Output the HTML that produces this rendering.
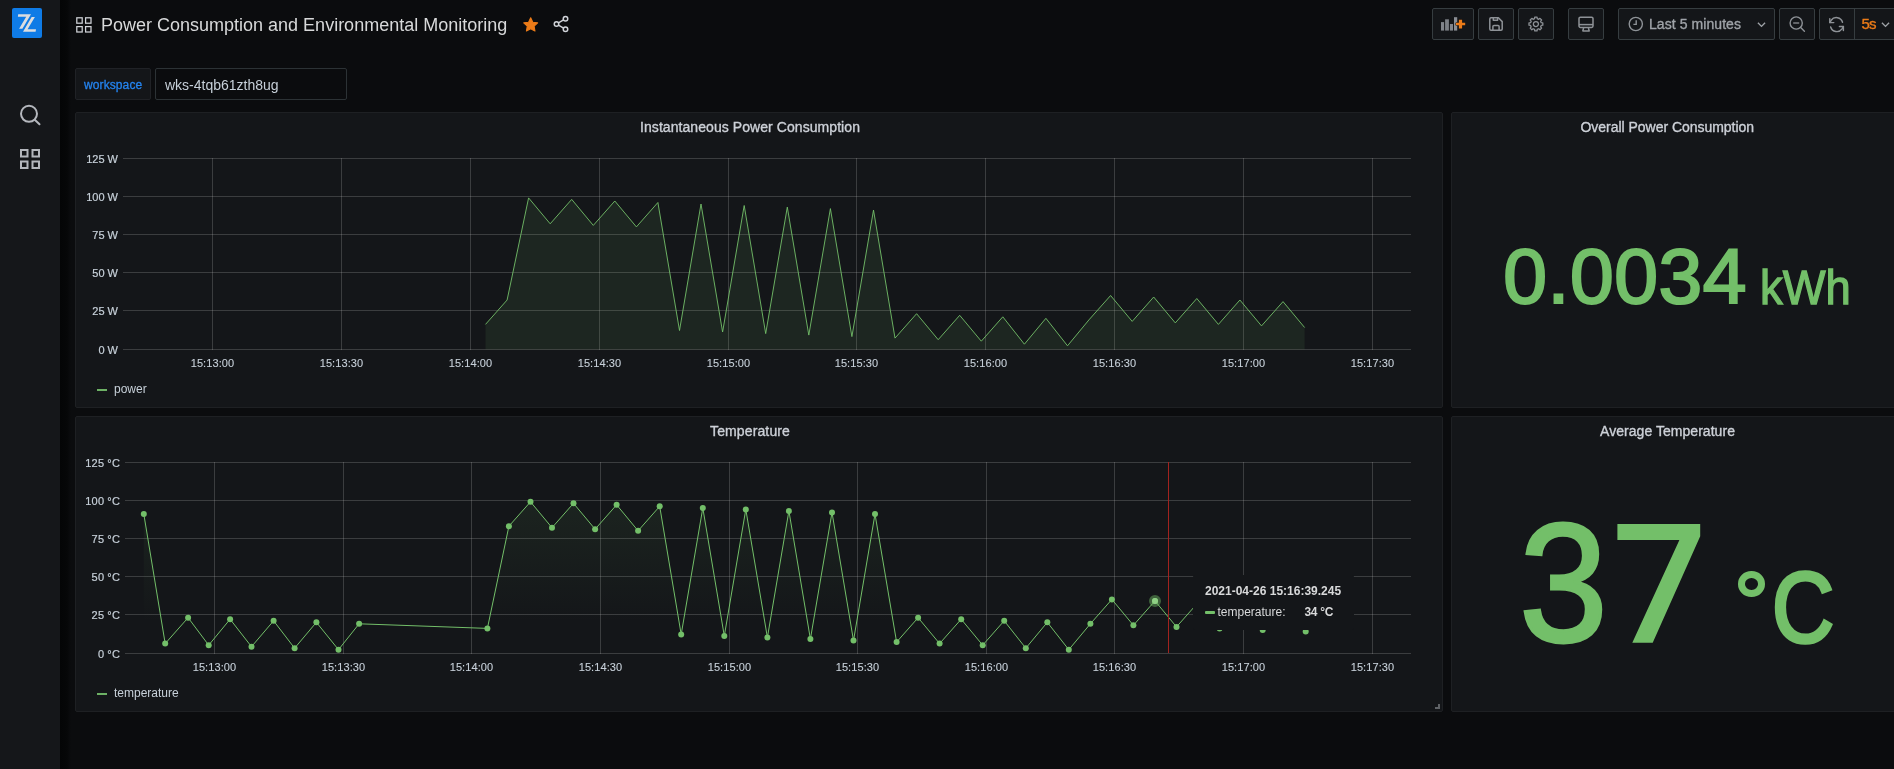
<!DOCTYPE html>
<html>
<head>
<meta charset="utf-8">
<title>Power Consumption and Environmental Monitoring - Grafana</title>
<style>
*{box-sizing:border-box;margin:0;padding:0}
html,body{width:1894px;height:769px;overflow:hidden;background:#0b0c0e;color:#c7d0d9;font-family:"Liberation Sans",sans-serif;font-size:14px}
#root{position:absolute;left:0;top:0;width:1894px;height:769px;overflow:hidden;will-change:transform}
.abs{position:absolute}
.med{-webkit-text-stroke:0.35px currentColor}
#side{position:absolute;left:0;top:0;width:59.5px;height:769px;background:#15171a}
#shadow{position:absolute;left:59.5px;top:0;width:11px;height:769px;background:linear-gradient(to right,#040506 0%,#060708 65%,#0b0c0e 100%)}
#logo{position:absolute;left:12px;top:8px;width:30px;height:30px;border-radius:2px;background:#0f7be6}
.panel{position:absolute;background:#141619;border:1px solid #1e2023;border-radius:2px}
.ptitle{position:absolute;font-size:14px;-webkit-text-stroke:0.35px currentColor;color:#cdd1d8;white-space:nowrap;text-align:center;transform-origin:center}
.btn{position:absolute;top:8px;height:32px;background:#141619;border:1px solid #363d40;border-radius:2px}
.yl{position:absolute;font-size:11px;-webkit-text-stroke:0.2px currentColor;line-height:14px;text-align:right;color:#c7d0d9;white-space:nowrap}
.xl{position:absolute;font-size:11px;-webkit-text-stroke:0.1px currentColor;letter-spacing:0.1px;line-height:14px;width:80px;text-align:center;color:#c7d0d9;white-space:nowrap}
.charts{position:absolute;left:0;top:0}
.leg{position:absolute;font-size:12px;line-height:14px;color:#c7d0d9;white-space:nowrap}
.dash{position:absolute;height:2px;width:11px;background:#6db165}
.big{position:absolute;color:#73bf69;white-space:nowrap;line-height:1}
</style>
</head>
<body>
<div id="root">
<!-- side menu -->
<div id="side"></div>
<div id="shadow"></div>
<div id="logo">
<svg width="30" height="30" viewBox="0 0 30 30"><polygon points="6.2,6.2 19,6.2 10.4,20.7 7.1,20.7 14.2,8.8 5.9,8.8" fill="#dcdde0"/><polygon points="19.65,9 22.9,9 15.6,21.3 24,21.3 23.6,23.7 11,23.7" fill="#dcdde0"/></svg>
</div>
<svg class="abs" style="left:18px;top:103px" width="24" height="24" viewBox="0 0 24 24" fill="none" stroke="#b4b7bd" stroke-width="2" stroke-linecap="round"><circle cx="11" cy="10.8" r="8"/><path d="M17 17 L21.5 21.3"/></svg>
<svg class="abs" style="left:20px;top:149px" width="20" height="20" viewBox="0 0 20 20" fill="none" stroke="#b4b7bd" stroke-width="2"><rect x="1" y="1" width="6.5" height="6.5"/><rect x="12.5" y="1" width="6.5" height="6.5"/><rect x="1" y="12.5" width="6.5" height="6.5"/><rect x="12.5" y="12.5" width="6.5" height="6.5"/></svg>

<!-- nav bar -->
<svg class="abs" style="left:76px;top:17px" width="16" height="16" viewBox="0 0 16 16" fill="none" stroke="#d0d3d8" stroke-width="1.25"><rect x="0.8" y="0.8" width="5.4" height="5.4"/><rect x="9.6" y="0.8" width="5.4" height="5.4"/><rect x="0.8" y="9.6" width="5.4" height="5.4"/><rect x="9.6" y="9.6" width="5.4" height="5.4"/></svg>
<div id="title" class="abs" style="left:101px;top:14px;font-size:18px;line-height:22px;color:#d8d9da;white-space:nowrap">Power Consumption and Environmental Monitoring</div>
<svg class="abs" style="left:522.3px;top:15.8px" width="17.4" height="17.4" viewBox="0 0 24 24"><path d="M12 2.5 l2.9 6.1 6.7 .9 -4.9 4.6 1.2 6.6 -5.9 -3.2 -5.9 3.2 1.2 -6.6 -4.9 -4.6 6.7 -.9z" fill="#eb7b18" stroke="#eb7b18" stroke-width="1.5" stroke-linejoin="round"/></svg>
<svg class="abs" style="left:552px;top:15px" width="18" height="18" viewBox="0 0 24 24" fill="none" stroke="#d0d3d8" stroke-width="2"><circle cx="18" cy="5" r="3"/><circle cx="6" cy="12" r="3"/><circle cx="18" cy="19" r="3"/><path d="M8.6 10.5 L15.4 6.5 M8.6 13.5 L15.4 17.5"/></svg>

<!-- toolbar buttons -->
<div class="btn" style="left:1432px;width:42px"></div>
<div class="btn" style="left:1478px;width:36px"></div>
<div class="btn" style="left:1518px;width:36px"></div>
<div class="btn" style="left:1568px;width:36px"></div>
<div class="btn" style="left:1618px;width:157px"></div>
<div class="btn" style="left:1779px;width:36px"></div>
<div class="btn" style="left:1819px;width:36px;border-radius:2px 0 0 2px"></div>
<div class="btn" style="left:1854px;width:50px;border-radius:0"></div>

<!-- add panel icon -->
<svg class="abs" style="left:1440px;top:16px" width="26" height="16" viewBox="0 0 26 16"><rect x="1" y="6.1" width="3.1" height="8.5" fill="#80848a"/><rect x="5.1" y="3.3" width="3.8" height="11.3" fill="#7c8086"/><rect x="9.9" y="8" width="3.1" height="6.6" fill="#80848a"/><rect x="14" y="1.2" width="3.2" height="13.4" fill="#8a8e94"/><path d="M15.9 6.8 H18.9 V3.8 H22.1 V6.8 H25.2 V9.2 H22.1 V12.4 H18.9 V9.2 H15.9 Z" fill="#eb7b18" stroke="#141619" stroke-width="1" paint-order="stroke"/></svg>
<!-- save icon -->
<svg class="abs" style="left:1488px;top:16px" width="16" height="16" viewBox="0 0 16 16" fill="none" stroke="#8e9297" stroke-width="1.5" stroke-linejoin="round"><path d="M3 1.8 H10.4 L14.2 5.6 V13 a1.2 1.2 0 0 1 -1.2 1.2 H3 A1.2 1.2 0 0 1 1.8 13 V3 A1.2 1.2 0 0 1 3 1.8 Z"/><path d="M4.9 14 V10.6 a1.1 1.1 0 0 1 1.1 -1.1 H10 a1.1 1.1 0 0 1 1.1 1.1 V14"/><path d="M5.3 2 V4.3 H9.6 V2"/></svg>
<!-- gear icon -->
<svg class="abs" style="left:1526px;top:14px" width="20" height="20" viewBox="-10 -10 20 20" fill="none" stroke="#8e9297" stroke-width="1.3" stroke-linejoin="round"><path d="M-1.33,-5.34 L-1.15,-6.91 L1.15,-6.91 L1.33,-5.34 L2.84,-4.71 L4.07,-5.70 L5.70,-4.07 L4.71,-2.84 L5.34,-1.33 L6.91,-1.15 L6.91,1.15 L5.34,1.33 L4.71,2.84 L5.70,4.07 L4.07,5.70 L2.84,4.71 L1.33,5.34 L1.15,6.91 L-1.15,6.91 L-1.33,5.34 L-2.84,4.71 L-4.07,5.70 L-5.70,4.07 L-4.71,2.84 L-5.34,1.33 L-6.91,1.15 L-6.91,-1.15 L-5.34,-1.33 L-4.71,-2.84 L-5.70,-4.07 L-4.07,-5.70 L-2.84,-4.71 Z" transform="translate(-0.1,0.05)"/><circle cx="-0.1" cy="0.05" r="2.5"/></svg>
<!-- monitor icon -->
<svg class="abs" style="left:1578px;top:16px" width="16" height="16" viewBox="0 0 16 16" fill="none" stroke="#8e9297" stroke-width="1.5" stroke-linejoin="round"><rect x="1" y="1.2" width="14" height="10.3" rx="1.4"/><path d="M1 8.6 H15"/><path d="M5.6 12 L4.8 14.9 H11.2 L10.4 12"/></svg>
<!-- clock icon -->
<svg class="abs" style="left:1627px;top:15px" width="18" height="18" viewBox="0 0 18 18" fill="none" stroke="#8e9297" stroke-width="1.4"><circle cx="8.8" cy="9" r="6.6"/><path d="M9.2 5.2 V9.4 H6.4" stroke-linejoin="miter"/></svg>
<div id="tp" class="abs" style="left:1649px;top:15px;font-size:14px;line-height:18px;-webkit-text-stroke:0.35px currentColor;letter-spacing:0.07px;color:#9fa3a8;white-space:nowrap">Last 5 minutes</div>
<svg class="abs" style="left:1756.6px;top:21px" width="9" height="7.2" viewBox="0 0 10 8" fill="none" stroke="#9fa3a8" stroke-width="1.5"><path d="M1 2 L5 6 L9 2"/></svg>
<!-- zoom out -->
<svg class="abs" style="left:1788px;top:15px" width="18" height="18" viewBox="0 0 18 18" fill="none" stroke="#8e9297" stroke-width="1.4" stroke-linecap="round"><circle cx="8.2" cy="8" r="6.1"/><path d="M5.2 8 H11.2" stroke-linecap="butt" stroke-width="1.3"/><path d="M12.7 12.6 L16.4 16.2"/></svg>
<!-- refresh -->
<svg class="abs" style="left:1827.3px;top:14.6px" width="19.2" height="19.2" viewBox="0 0 24 24" fill="none" stroke="#8e9297" stroke-width="1.8" stroke-linecap="round" stroke-linejoin="round"><path d="M3.5 4.5 V9.5 H8.5"/><path d="M20.5 19.5 V14.5 H15.5"/><path d="M19.4 9 A8 8 0 0 0 5.2 6.6 L3.5 9.5"/><path d="M4.6 15 A8 8 0 0 0 18.8 17.4 L20.5 14.5"/></svg>
<div class="abs" style="left:1861.5px;top:14.5px;font-size:15px;line-height:18px;-webkit-text-stroke:0.35px currentColor;letter-spacing:-0.9px;color:#eb7b18">5s</div>
<svg class="abs" style="left:1880.7px;top:21px" width="9" height="7.2" viewBox="0 0 10 8" fill="none" stroke="#9fa3a8" stroke-width="1.5"><path d="M1 2 L5 6 L9 2"/></svg>

<!-- variables -->
<div class="abs" style="left:75px;top:68px;width:76px;height:32px;background:#141619;border:1px solid #202226;border-radius:2px"></div>
<div id="wlab" class="abs" style="left:84px;top:77px;font-size:12px;line-height:16px;-webkit-text-stroke:0.3px currentColor;letter-spacing:0.1px;color:#2483ee;white-space:nowrap">workspace</div>
<div class="abs" style="left:155px;top:68px;width:192px;height:32px;background:#0b0c0e;border:1px solid #2c3235;border-radius:2px"></div>
<div id="wval" class="abs" style="left:165px;top:76px;font-size:14px;line-height:18px;color:#c7d0d9;white-space:nowrap">wks-4tqb61zth8ug</div>

<!-- panels -->
<div class="panel" style="left:75px;top:112px;width:1368px;height:296px"></div>
<div class="panel" style="left:1451px;top:112px;width:451px;height:296px"></div>
<div class="panel" style="left:75px;top:416px;width:1368px;height:296px"></div>
<div class="panel" style="left:1451px;top:416px;width:451px;height:296px"></div>

<div id="t1" class="ptitle" style="left:640px;top:118px;line-height:18px;letter-spacing:0.067px">Instantaneous Power Consumption</div>
<div id="t2" class="ptitle" style="left:1580.5px;top:118px;line-height:18px;letter-spacing:-0.03px">Overall Power Consumption</div>
<div id="t3" class="ptitle" style="left:710px;top:422px;line-height:18px;letter-spacing:0.128px">Temperature</div>
<div id="t4" class="ptitle" style="left:1600px;top:422px;line-height:18px;letter-spacing:0.046px">Average Temperature</div>

<svg class="charts" width="1894" height="769" viewBox="0 0 1894 769">
<defs><linearGradient id="tg" x1="0" y1="462" x2="0" y2="622" gradientUnits="userSpaceOnUse"><stop offset="0" stop-color="#73bf69" stop-opacity="0.11"/><stop offset="1" stop-color="#73bf69" stop-opacity="0"/></linearGradient></defs>
<rect x="212" y="158" width="1" height="192" fill="#c8c8c8" fill-opacity="0.22"/><rect x="341" y="158" width="1" height="192" fill="#c8c8c8" fill-opacity="0.22"/><rect x="470" y="158" width="1" height="192" fill="#c8c8c8" fill-opacity="0.22"/><rect x="599" y="158" width="1" height="192" fill="#c8c8c8" fill-opacity="0.22"/><rect x="728" y="158" width="1" height="192" fill="#c8c8c8" fill-opacity="0.22"/><rect x="856" y="158" width="1" height="192" fill="#c8c8c8" fill-opacity="0.22"/><rect x="985" y="158" width="1" height="192" fill="#c8c8c8" fill-opacity="0.22"/><rect x="1114" y="158" width="1" height="192" fill="#c8c8c8" fill-opacity="0.22"/><rect x="1243" y="158" width="1" height="192" fill="#c8c8c8" fill-opacity="0.22"/><rect x="1372" y="158" width="1" height="192" fill="#c8c8c8" fill-opacity="0.22"/><rect x="123" y="158" width="1288" height="1" fill="#c8c8c8" fill-opacity="0.22"/><rect x="123" y="196" width="1288" height="1" fill="#c8c8c8" fill-opacity="0.22"/><rect x="123" y="234" width="1288" height="1" fill="#c8c8c8" fill-opacity="0.22"/><rect x="123" y="272" width="1288" height="1" fill="#c8c8c8" fill-opacity="0.22"/><rect x="123" y="310" width="1288" height="1" fill="#c8c8c8" fill-opacity="0.22"/><rect x="123" y="349" width="1288" height="1" fill="#c8c8c8" fill-opacity="0.22"/>
<path d="M485.5,324.4 L507.1,300.0 L528.6,197.9 L550.2,223.8 L571.7,199.4 L593.3,225.4 L614.8,201.0 L636.4,226.9 L657.9,202.5 L679.5,330.5 L701.0,204.0 L722.6,332.0 L744.2,205.5 L765.7,333.6 L787.3,207.1 L808.8,335.1 L830.4,208.6 L851.9,336.6 L873.5,210.1 L895.0,338.1 L916.6,313.7 L938.2,339.7 L959.7,315.3 L981.3,341.2 L1002.8,316.8 L1024.4,344.2 L1045.9,318.3 L1067.5,345.8 L1089.0,319.8 L1110.6,295.5 L1132.2,321.4 L1153.7,297.0 L1175.3,322.9 L1196.8,298.5 L1218.4,324.4 L1239.9,300.0 L1261.5,325.9 L1283.0,301.6 L1304.6,327.5 L1304.6,349.5 L485.5,349.5 Z" fill="#73bf69" fill-opacity="0.1"/>
<path d="M485.5,324.4 L507.1,300.0 L528.6,197.9 L550.2,223.8 L571.7,199.4 L593.3,225.4 L614.8,201.0 L636.4,226.9 L657.9,202.5 L679.5,330.5 L701.0,204.0 L722.6,332.0 L744.2,205.5 L765.7,333.6 L787.3,207.1 L808.8,335.1 L830.4,208.6 L851.9,336.6 L873.5,210.1 L895.0,338.1 L916.6,313.7 L938.2,339.7 L959.7,315.3 L981.3,341.2 L1002.8,316.8 L1024.4,344.2 L1045.9,318.3 L1067.5,345.8 L1089.0,319.8 L1110.6,295.5 L1132.2,321.4 L1153.7,297.0 L1175.3,322.9 L1196.8,298.5 L1218.4,324.4 L1239.9,300.0 L1261.5,325.9 L1283.0,301.6 L1304.6,327.5" fill="none" stroke="#73bf69" stroke-width="1" stroke-opacity="0.9" stroke-linejoin="round"/>
<rect x="214" y="462" width="1" height="192" fill="#c8c8c8" fill-opacity="0.22"/><rect x="343" y="462" width="1" height="192" fill="#c8c8c8" fill-opacity="0.22"/><rect x="471" y="462" width="1" height="192" fill="#c8c8c8" fill-opacity="0.22"/><rect x="600" y="462" width="1" height="192" fill="#c8c8c8" fill-opacity="0.22"/><rect x="729" y="462" width="1" height="192" fill="#c8c8c8" fill-opacity="0.22"/><rect x="857" y="462" width="1" height="192" fill="#c8c8c8" fill-opacity="0.22"/><rect x="986" y="462" width="1" height="192" fill="#c8c8c8" fill-opacity="0.22"/><rect x="1114" y="462" width="1" height="192" fill="#c8c8c8" fill-opacity="0.22"/><rect x="1243" y="462" width="1" height="192" fill="#c8c8c8" fill-opacity="0.22"/><rect x="1372" y="462" width="1" height="192" fill="#c8c8c8" fill-opacity="0.22"/><rect x="125" y="462" width="1286" height="1" fill="#c8c8c8" fill-opacity="0.22"/><rect x="125" y="500" width="1286" height="1" fill="#c8c8c8" fill-opacity="0.22"/><rect x="125" y="538" width="1286" height="1" fill="#c8c8c8" fill-opacity="0.22"/><rect x="125" y="576" width="1286" height="1" fill="#c8c8c8" fill-opacity="0.22"/><rect x="125" y="614" width="1286" height="1" fill="#c8c8c8" fill-opacity="0.22"/><rect x="125" y="653" width="1286" height="1" fill="#c8c8c8" fill-opacity="0.22"/>
<path d="M143.8,514.0 L165.2,643.6 L188.1,617.7 L208.7,645.2 L230.1,619.2 L251.5,646.7 L273.6,620.8 L294.6,648.2 L316.4,622.3 L338.5,649.7 L359.1,623.8 L487.4,628.4 L508.9,526.2 L530.5,501.8 L552.0,527.7 L573.5,503.3 L595.1,529.2 L616.6,504.8 L638.1,530.8 L659.7,506.3 L681.2,634.5 L702.8,507.9 L724.3,636.0 L745.8,509.4 L767.4,637.5 L788.9,510.9 L810.4,639.1 L832.0,512.4 L853.5,640.6 L875.0,514.0 L896.6,642.1 L918.1,617.7 L939.6,643.6 L961.2,619.2 L982.7,645.2 L1004.2,620.8 L1025.8,648.2 L1047.3,622.3 L1068.8,649.7 L1090.4,623.8 L1111.9,599.4 L1133.4,625.3 L1155.0,600.9 L1176.5,626.9 L1198.1,602.5 L1219.6,628.4 L1241.1,604.0 L1262.7,629.9 L1284.2,605.5 L1305.7,631.4 L1305.7,653.1 L143.8,653.1 Z" fill="url(#tg)"/>
<path d="M143.8,514.0 L165.2,643.6 L188.1,617.7 L208.7,645.2 L230.1,619.2 L251.5,646.7 L273.6,620.8 L294.6,648.2 L316.4,622.3 L338.5,649.7 L359.1,623.8 L487.4,628.4 L508.9,526.2 L530.5,501.8 L552.0,527.7 L573.5,503.3 L595.1,529.2 L616.6,504.8 L638.1,530.8 L659.7,506.3 L681.2,634.5 L702.8,507.9 L724.3,636.0 L745.8,509.4 L767.4,637.5 L788.9,510.9 L810.4,639.1 L832.0,512.4 L853.5,640.6 L875.0,514.0 L896.6,642.1 L918.1,617.7 L939.6,643.6 L961.2,619.2 L982.7,645.2 L1004.2,620.8 L1025.8,648.2 L1047.3,622.3 L1068.8,649.7 L1090.4,623.8 L1111.9,599.4 L1133.4,625.3 L1155.0,600.9 L1176.5,626.9 L1198.1,602.5 L1219.6,628.4 L1241.1,604.0 L1262.7,629.9 L1284.2,605.5 L1305.7,631.4" fill="none" stroke="#73bf69" stroke-width="1" stroke-linejoin="round"/>
<circle cx="143.8" cy="514.0" r="3" fill="#73bf69"/>
<circle cx="165.2" cy="643.6" r="3" fill="#73bf69"/>
<circle cx="188.1" cy="617.7" r="3" fill="#73bf69"/>
<circle cx="208.7" cy="645.2" r="3" fill="#73bf69"/>
<circle cx="230.1" cy="619.2" r="3" fill="#73bf69"/>
<circle cx="251.5" cy="646.7" r="3" fill="#73bf69"/>
<circle cx="273.6" cy="620.8" r="3" fill="#73bf69"/>
<circle cx="294.6" cy="648.2" r="3" fill="#73bf69"/>
<circle cx="316.4" cy="622.3" r="3" fill="#73bf69"/>
<circle cx="338.5" cy="649.7" r="3" fill="#73bf69"/>
<circle cx="359.1" cy="623.8" r="3" fill="#73bf69"/>
<circle cx="487.4" cy="628.4" r="3" fill="#73bf69"/>
<circle cx="508.9" cy="526.2" r="3" fill="#73bf69"/>
<circle cx="530.5" cy="501.8" r="3" fill="#73bf69"/>
<circle cx="552.0" cy="527.7" r="3" fill="#73bf69"/>
<circle cx="573.5" cy="503.3" r="3" fill="#73bf69"/>
<circle cx="595.1" cy="529.2" r="3" fill="#73bf69"/>
<circle cx="616.6" cy="504.8" r="3" fill="#73bf69"/>
<circle cx="638.1" cy="530.8" r="3" fill="#73bf69"/>
<circle cx="659.7" cy="506.3" r="3" fill="#73bf69"/>
<circle cx="681.2" cy="634.5" r="3" fill="#73bf69"/>
<circle cx="702.8" cy="507.9" r="3" fill="#73bf69"/>
<circle cx="724.3" cy="636.0" r="3" fill="#73bf69"/>
<circle cx="745.8" cy="509.4" r="3" fill="#73bf69"/>
<circle cx="767.4" cy="637.5" r="3" fill="#73bf69"/>
<circle cx="788.9" cy="510.9" r="3" fill="#73bf69"/>
<circle cx="810.4" cy="639.1" r="3" fill="#73bf69"/>
<circle cx="832.0" cy="512.4" r="3" fill="#73bf69"/>
<circle cx="853.5" cy="640.6" r="3" fill="#73bf69"/>
<circle cx="875.0" cy="514.0" r="3" fill="#73bf69"/>
<circle cx="896.6" cy="642.1" r="3" fill="#73bf69"/>
<circle cx="918.1" cy="617.7" r="3" fill="#73bf69"/>
<circle cx="939.6" cy="643.6" r="3" fill="#73bf69"/>
<circle cx="961.2" cy="619.2" r="3" fill="#73bf69"/>
<circle cx="982.7" cy="645.2" r="3" fill="#73bf69"/>
<circle cx="1004.2" cy="620.8" r="3" fill="#73bf69"/>
<circle cx="1025.8" cy="648.2" r="3" fill="#73bf69"/>
<circle cx="1047.3" cy="622.3" r="3" fill="#73bf69"/>
<circle cx="1068.8" cy="649.7" r="3" fill="#73bf69"/>
<circle cx="1090.4" cy="623.8" r="3" fill="#73bf69"/>
<circle cx="1111.9" cy="599.4" r="3" fill="#73bf69"/>
<circle cx="1133.4" cy="625.3" r="3" fill="#73bf69"/>
<circle cx="1155.0" cy="600.9" r="3" fill="#73bf69"/>
<circle cx="1176.5" cy="626.9" r="3" fill="#73bf69"/>
<circle cx="1198.1" cy="602.5" r="3" fill="#73bf69"/>
<circle cx="1219.6" cy="628.4" r="3" fill="#73bf69"/>
<circle cx="1241.1" cy="604.0" r="3" fill="#73bf69"/>
<circle cx="1262.7" cy="629.9" r="3" fill="#73bf69"/>
<circle cx="1284.2" cy="605.5" r="3" fill="#73bf69"/>
<circle cx="1305.7" cy="631.4" r="3" fill="#73bf69"/>
<circle cx="1154.9850000000001" cy="600.9" r="6" fill="#73bf69" fill-opacity="0.45"/>
<circle cx="1154.9850000000001" cy="600.9" r="3" fill="#8fd085"/>
<rect x="1168" y="462" width="1" height="191" fill="#a2231f"/>
</svg>
<div class="yl" style="top:152px;left:75px;width:43px">125 W</div>
<div class="yl" style="top:190px;left:75px;width:43px">100 W</div>
<div class="yl" style="top:228px;left:75px;width:43px">75 W</div>
<div class="yl" style="top:266px;left:75px;width:43px">50 W</div>
<div class="yl" style="top:304px;left:75px;width:43px">25 W</div>
<div class="yl" style="top:343px;left:75px;width:43px">0 W</div>
<div class="xl" style="top:356px;left:172.5px">15:13:00</div>
<div class="xl" style="top:356px;left:301.5px">15:13:30</div>
<div class="xl" style="top:356px;left:430.5px">15:14:00</div>
<div class="xl" style="top:356px;left:559.5px">15:14:30</div>
<div class="xl" style="top:356px;left:688.5px">15:15:00</div>
<div class="xl" style="top:356px;left:816.5px">15:15:30</div>
<div class="xl" style="top:356px;left:945.5px">15:16:00</div>
<div class="xl" style="top:356px;left:1074.5px">15:16:30</div>
<div class="xl" style="top:356px;left:1203.5px">15:17:00</div>
<div class="xl" style="top:356px;left:1332.5px">15:17:30</div>
<div class="yl" style="top:456px;left:75px;width:45px;letter-spacing:0.15px">125 °C</div>
<div class="yl" style="top:494px;left:75px;width:45px;letter-spacing:0.15px">100 °C</div>
<div class="yl" style="top:532px;left:75px;width:45px;letter-spacing:0.15px">75 °C</div>
<div class="yl" style="top:570px;left:75px;width:45px;letter-spacing:0.15px">50 °C</div>
<div class="yl" style="top:608px;left:75px;width:45px;letter-spacing:0.15px">25 °C</div>
<div class="yl" style="top:647px;left:75px;width:45px;letter-spacing:0.15px">0 °C</div>
<div class="xl" style="top:660px;left:174.5px">15:13:00</div>
<div class="xl" style="top:660px;left:303.5px">15:13:30</div>
<div class="xl" style="top:660px;left:431.5px">15:14:00</div>
<div class="xl" style="top:660px;left:560.5px">15:14:30</div>
<div class="xl" style="top:660px;left:689.5px">15:15:00</div>
<div class="xl" style="top:660px;left:817.5px">15:15:30</div>
<div class="xl" style="top:660px;left:946.5px">15:16:00</div>
<div class="xl" style="top:660px;left:1074.5px">15:16:30</div>
<div class="xl" style="top:660px;left:1203.5px">15:17:00</div>
<div class="xl" style="top:660px;left:1332.5px">15:17:30</div>

<!-- legends -->
<div class="dash" style="left:97px;top:389px;width:10px"></div>
<div class="leg" style="left:114px;top:382px">power</div>
<div class="dash" style="left:97px;top:693px;width:10px"></div>
<div class="leg" style="left:114px;top:686px">temperature</div>

<!-- resize handle -->
<div class="abs" style="left:1438px;top:704px;width:2px;height:5px;background:#5f6266"></div><div class="abs" style="left:1435px;top:707px;width:5px;height:2px;background:#5f6266"></div>

<!-- tooltip -->
<div class="abs" style="left:1193px;top:575px;width:161px;height:55px;background:#141619;border-radius:2px"></div>
<div id="tt1" class="abs" style="left:1205px;top:584px;font-size:12px;line-height:14px;font-weight:bold;color:#d8d9da;white-space:nowrap">2021-04-26 15:16:39.245</div>
<div class="abs" style="left:1205px;top:610.5px;width:10px;height:3px;background:#73bf69;border-radius:1px"></div>
<div id="tt2" class="abs" style="left:1217.5px;top:605px;font-size:12px;line-height:14px;color:#d8d9da;white-space:nowrap">temperature:</div>
<div id="tt3" class="abs" style="left:1304.5px;top:605px;font-size:12px;line-height:14px;font-weight:bold;letter-spacing:-0.3px;color:#d8d9da;white-space:nowrap">34 °C</div>

<!-- stat values -->
<div id="s1" class="big" style="left:1503.3px;top:237px;font-size:78.6px;-webkit-text-stroke:2.2px #73bf69;letter-spacing:0.55px">0.0034</div>
<div id="s1u" class="big" style="left:1759.5px;top:263.5px;font-size:48px;-webkit-text-stroke:1.3px #73bf69;transform-origin:left top;transform:scaleX(0.945)">kWh</div>
<div id="s2" class="big" style="left:1519px;top:497.5px;font-size:169.5px;-webkit-text-stroke:3px #73bf69;letter-spacing:0;transform-origin:left top;transform:scaleX(0.942)">3</div>
<svg class="abs" style="left:0;top:0" width="1894" height="769"><polygon points="1617.4,524.1 1700.2,524.1 1700.2,536.2 1652.7,642.7 1632.3,642.7 1679.4,540 1617.4,540" fill="#73bf69"/></svg>
<div id="deg" class="abs" style="left:1738px;top:571.2px;width:26.7px;height:25.4px;border:7px solid #73bf69;border-radius:50%"></div>
<div id="s2c" class="big" style="left:1772px;top:557.7px;font-size:99.5px;-webkit-text-stroke:3.6px #73bf69;transform-origin:left top;transform:scaleX(0.865)">C</div>
</div>
</body>
</html>
